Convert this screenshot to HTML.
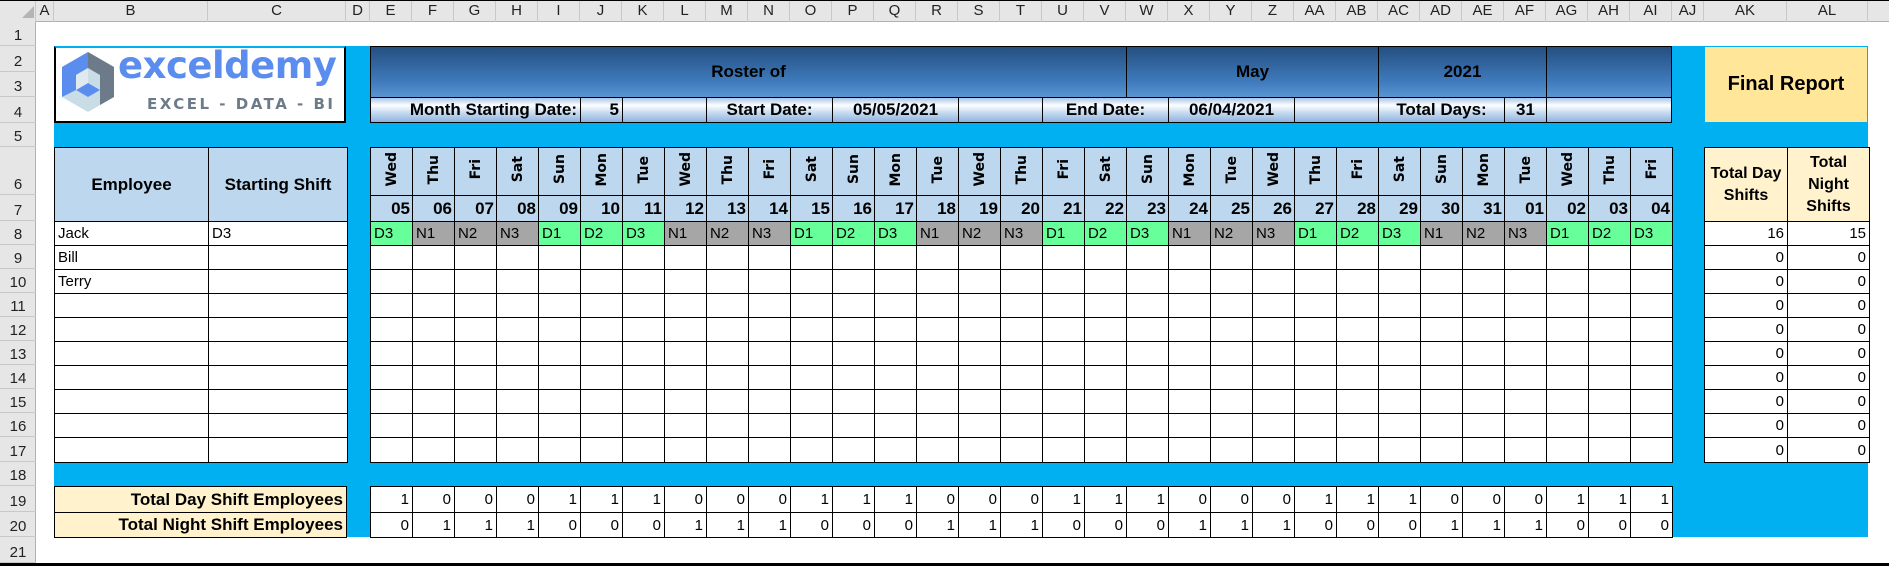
<!DOCTYPE html>
<html><head><meta charset="utf-8"><style>
*{margin:0;padding:0;box-sizing:border-box}
body{width:1889px;height:566px;overflow:hidden;background:#fff;position:relative;font-family:"Liberation Sans Narrow","Liberation Sans",sans-serif;font-size:15px;color:#000}
.a{position:absolute}
.ch{position:absolute;top:0;height:22px;line-height:22px;text-align:center;font-size:15px;color:#222;border-right:1px solid #c8c8c8}
.rh{position:absolute;left:0;width:36px;text-align:center;font-size:15px;color:#222;border-bottom:1px solid #c8c8c8;display:flex;align-items:flex-end;justify-content:center;padding-bottom:1px}
table{border-collapse:collapse;table-layout:fixed;position:absolute}
td{border:1px solid #000;padding:0 3px;overflow:hidden;white-space:nowrap;font-size:15px}
.dh td{background:#bdd7ee;text-align:center;vertical-align:middle;padding:0}
.v{writing-mode:vertical-rl;transform:rotate(180deg);font-family:"DejaVu Sans",sans-serif;font-weight:bold;font-size:14px;display:inline-block}
.num td{background:#bdd7ee;text-align:right;font-weight:bold;font-size:17px;padding-right:2px}
.d{background:#66ff99}.n{background:#a6a6a6}
.r td{text-align:right}
.hb{position:absolute;border:1px solid #000;font-weight:bold;font-size:17px;display:flex;align-items:center;justify-content:center}
.top{background:linear-gradient(#254f80,#3f7bbd 70%,#5a95d2)}
.mid{background:linear-gradient(#a8c6e8,#fdfeff 30%,#c9dcf1 60%,#8fb3de)}
</style></head><body>
<div class="a" style="left:0;top:0;width:1889px;height:22px;background:#e6e6e6;border-bottom:1px solid #b0b0b0"></div>
<div class="a" style="left:0;top:0;width:36px;height:22px;background:#e6e6e6;border-right:1px solid #c8c8c8"></div>
<div class="a" style="left:22px;top:6px;width:0;height:0;border-left:12px solid transparent;border-bottom:12px solid #b4b4b4"></div>
<div class="ch" style="left:36px;width:18px">A</div>
<div class="ch" style="left:54px;width:154px">B</div>
<div class="ch" style="left:208px;width:138px">C</div>
<div class="ch" style="left:346px;width:24px">D</div>
<div class="ch" style="left:370px;width:42px">E</div><div class="ch" style="left:412px;width:42px">F</div><div class="ch" style="left:454px;width:42px">G</div><div class="ch" style="left:496px;width:42px">H</div><div class="ch" style="left:538px;width:42px">I</div><div class="ch" style="left:580px;width:42px">J</div><div class="ch" style="left:622px;width:42px">K</div><div class="ch" style="left:664px;width:42px">L</div><div class="ch" style="left:706px;width:42px">M</div><div class="ch" style="left:748px;width:42px">N</div><div class="ch" style="left:790px;width:42px">O</div><div class="ch" style="left:832px;width:42px">P</div><div class="ch" style="left:874px;width:42px">Q</div><div class="ch" style="left:916px;width:42px">R</div><div class="ch" style="left:958px;width:42px">S</div><div class="ch" style="left:1000px;width:42px">T</div><div class="ch" style="left:1042px;width:42px">U</div><div class="ch" style="left:1084px;width:42px">V</div><div class="ch" style="left:1126px;width:42px">W</div><div class="ch" style="left:1168px;width:42px">X</div><div class="ch" style="left:1210px;width:42px">Y</div><div class="ch" style="left:1252px;width:42px">Z</div><div class="ch" style="left:1294px;width:42px">AA</div><div class="ch" style="left:1336px;width:42px">AB</div><div class="ch" style="left:1378px;width:42px">AC</div><div class="ch" style="left:1420px;width:42px">AD</div><div class="ch" style="left:1462px;width:42px">AE</div><div class="ch" style="left:1504px;width:42px">AF</div><div class="ch" style="left:1546px;width:42px">AG</div><div class="ch" style="left:1588px;width:42px">AH</div><div class="ch" style="left:1630px;width:42px">AI</div>
<div class="ch" style="left:1672px;width:32px">AJ</div>
<div class="ch" style="left:1704px;width:83px">AK</div>
<div class="ch" style="left:1787px;width:81px">AL</div>
<div class="a" style="left:0;top:22px;width:36px;height:544px;background:#e6e6e6;border-right:1px solid #b0b0b0"></div>
<div class="rh" style="top:22px;height:24px">1</div><div class="rh" style="top:46px;height:26px">2</div><div class="rh" style="top:72px;height:25px">3</div><div class="rh" style="top:97px;height:26px">4</div><div class="rh" style="top:123px;height:24px">5</div><div class="rh" style="top:147px;height:48px">6</div><div class="rh" style="top:195px;height:26px">7</div><div class="rh" style="top:221px;height:24px">8</div><div class="rh" style="top:245px;height:24px">9</div><div class="rh" style="top:269px;height:24px">10</div><div class="rh" style="top:293px;height:24px">11</div><div class="rh" style="top:317px;height:24px">12</div><div class="rh" style="top:341px;height:24px">13</div><div class="rh" style="top:365px;height:24px">14</div><div class="rh" style="top:389px;height:24px">15</div><div class="rh" style="top:413px;height:24px">16</div><div class="rh" style="top:437px;height:25px">17</div><div class="rh" style="top:462px;height:24px">18</div><div class="rh" style="top:486px;height:26px">19</div><div class="rh" style="top:512px;height:25px">20</div><div class="rh" style="top:537px;height:26px">21</div>
<div class="a" style="left:54px;top:46px;width:1814px;height:491px;background:#00b0f0"></div>
<div class="a" style="left:54px;top:46px;width:292px;height:77px;background:#fff;border:2px solid #000;border-top-color:#00b0f0"></div>
<svg class="a" style="left:60px;top:50px" width="56" height="68" viewBox="0 0 56 68">
<polygon points="28,2 54,17 54,47 28,62 2,47 2,17" fill="#c9dde6"/>
<polygon points="28,2 54,17 54,47 40,55 40,25 28,18" fill="#6c7a89"/>
<polygon points="2,17 28,2 28,18 16,25 16,40 2,47" fill="#5b8def"/>
<polygon points="16,40 28,33 40,40 28,47" fill="#5b8def"/>
<polygon points="16,25 28,18 28,33 16,40" fill="#dfe9ee"/>
</svg>
<div class="a" style="left:118px;top:44px;font-family:'DejaVu Sans',sans-serif;font-weight:bold;font-size:37px;color:#5b8def;letter-spacing:-0.5px">exceldemy</div>
<div class="a" style="left:147px;top:95px;font-family:'DejaVu Sans',sans-serif;font-size:15px;color:#6c7a89;letter-spacing:2.5px;font-weight:bold">EXCEL - DATA - BI</div>
<div class="hb top" style="left:370px;top:46px;width:757px;height:52px">Roster of</div>
<div class="hb top" style="left:1126px;top:46px;width:253px;height:52px">May</div>
<div class="hb top" style="left:1378px;top:46px;width:169px;height:52px">2021</div>
<div class="hb top" style="left:1546px;top:46px;width:126px;height:52px"></div>
<div class="hb mid" style="left:370px;top:97px;width:211px;height:26px;justify-content:flex-end;padding-right:3px">Month Starting Date:</div>
<div class="hb mid" style="left:580px;top:97px;width:43px;height:26px;justify-content:flex-end;padding-right:3px">5</div>
<div class="hb mid" style="left:622px;top:97px;width:85px;height:26px"></div>
<div class="hb mid" style="left:706px;top:97px;width:127px;height:26px">Start Date:</div>
<div class="hb mid" style="left:832px;top:97px;width:127px;height:26px">05/05/2021</div>
<div class="hb mid" style="left:958px;top:97px;width:85px;height:26px"></div>
<div class="hb mid" style="left:1042px;top:97px;width:127px;height:26px">End Date:</div>
<div class="hb mid" style="left:1168px;top:97px;width:127px;height:26px">06/04/2021</div>
<div class="hb mid" style="left:1294px;top:97px;width:85px;height:26px"></div>
<div class="hb mid" style="left:1378px;top:97px;width:127px;height:26px">Total Days:</div>
<div class="hb mid" style="left:1504px;top:97px;width:43px;height:26px">31</div>
<div class="hb mid" style="left:1546px;top:97px;width:126px;height:26px"></div>
<div class="hb" style="left:1704px;top:46px;width:164px;height:77px;background:#ffe699;border-color:#00b0f0;font-size:20px">Final Report</div>
<table style="left:54px;top:147px;width:293px">
<colgroup><col style="width:154px"><col style="width:139px"></colgroup>
<tr style="height:74px"><td style="background:#bdd7ee;text-align:center;font-weight:bold;font-size:17px">Employee</td><td style="background:#bdd7ee;text-align:center;font-weight:bold;font-size:17px">Starting Shift</td></tr>
<tr style="height:24px;background:#fff"><td>Jack</td><td>D3</td></tr>
<tr style="height:24px;background:#fff"><td>Bill</td><td></td></tr>
<tr style="height:24px;background:#fff"><td>Terry</td><td></td></tr>
<tr style="height:24px;background:#fff"><td></td><td></td></tr>
<tr style="height:24px;background:#fff"><td></td><td></td></tr>
<tr style="height:24px;background:#fff"><td></td><td></td></tr>
<tr style="height:24px;background:#fff"><td></td><td></td></tr>
<tr style="height:24px;background:#fff"><td></td><td></td></tr>
<tr style="height:24px;background:#fff"><td></td><td></td></tr>
<tr style="height:25px;background:#fff"><td></td><td></td></tr>
</table>
<table style="left:370px;top:147px;width:1303px;background:#fff">
<tr class="dh" style="height:48px"><td><span class="v">Wed</span></td><td><span class="v">Thu</span></td><td><span class="v">Fri</span></td><td><span class="v">Sat</span></td><td><span class="v">Sun</span></td><td><span class="v">Mon</span></td><td><span class="v">Tue</span></td><td><span class="v">Wed</span></td><td><span class="v">Thu</span></td><td><span class="v">Fri</span></td><td><span class="v">Sat</span></td><td><span class="v">Sun</span></td><td><span class="v">Mon</span></td><td><span class="v">Tue</span></td><td><span class="v">Wed</span></td><td><span class="v">Thu</span></td><td><span class="v">Fri</span></td><td><span class="v">Sat</span></td><td><span class="v">Sun</span></td><td><span class="v">Mon</span></td><td><span class="v">Tue</span></td><td><span class="v">Wed</span></td><td><span class="v">Thu</span></td><td><span class="v">Fri</span></td><td><span class="v">Sat</span></td><td><span class="v">Sun</span></td><td><span class="v">Mon</span></td><td><span class="v">Tue</span></td><td><span class="v">Wed</span></td><td><span class="v">Thu</span></td><td><span class="v">Fri</span></td></tr>
<tr class="num" style="height:26px"><td>05</td><td>06</td><td>07</td><td>08</td><td>09</td><td>10</td><td>11</td><td>12</td><td>13</td><td>14</td><td>15</td><td>16</td><td>17</td><td>18</td><td>19</td><td>20</td><td>21</td><td>22</td><td>23</td><td>24</td><td>25</td><td>26</td><td>27</td><td>28</td><td>29</td><td>30</td><td>31</td><td>01</td><td>02</td><td>03</td><td>04</td></tr>
<tr style="height:24px"><td class="d">D3</td><td class="n">N1</td><td class="n">N2</td><td class="n">N3</td><td class="d">D1</td><td class="d">D2</td><td class="d">D3</td><td class="n">N1</td><td class="n">N2</td><td class="n">N3</td><td class="d">D1</td><td class="d">D2</td><td class="d">D3</td><td class="n">N1</td><td class="n">N2</td><td class="n">N3</td><td class="d">D1</td><td class="d">D2</td><td class="d">D3</td><td class="n">N1</td><td class="n">N2</td><td class="n">N3</td><td class="d">D1</td><td class="d">D2</td><td class="d">D3</td><td class="n">N1</td><td class="n">N2</td><td class="n">N3</td><td class="d">D1</td><td class="d">D2</td><td class="d">D3</td></tr>
<tr style="height:24px"><td></td><td></td><td></td><td></td><td></td><td></td><td></td><td></td><td></td><td></td><td></td><td></td><td></td><td></td><td></td><td></td><td></td><td></td><td></td><td></td><td></td><td></td><td></td><td></td><td></td><td></td><td></td><td></td><td></td><td></td><td></td></tr>
<tr style="height:24px"><td></td><td></td><td></td><td></td><td></td><td></td><td></td><td></td><td></td><td></td><td></td><td></td><td></td><td></td><td></td><td></td><td></td><td></td><td></td><td></td><td></td><td></td><td></td><td></td><td></td><td></td><td></td><td></td><td></td><td></td><td></td></tr>
<tr style="height:24px"><td></td><td></td><td></td><td></td><td></td><td></td><td></td><td></td><td></td><td></td><td></td><td></td><td></td><td></td><td></td><td></td><td></td><td></td><td></td><td></td><td></td><td></td><td></td><td></td><td></td><td></td><td></td><td></td><td></td><td></td><td></td></tr>
<tr style="height:24px"><td></td><td></td><td></td><td></td><td></td><td></td><td></td><td></td><td></td><td></td><td></td><td></td><td></td><td></td><td></td><td></td><td></td><td></td><td></td><td></td><td></td><td></td><td></td><td></td><td></td><td></td><td></td><td></td><td></td><td></td><td></td></tr>
<tr style="height:24px"><td></td><td></td><td></td><td></td><td></td><td></td><td></td><td></td><td></td><td></td><td></td><td></td><td></td><td></td><td></td><td></td><td></td><td></td><td></td><td></td><td></td><td></td><td></td><td></td><td></td><td></td><td></td><td></td><td></td><td></td><td></td></tr>
<tr style="height:24px"><td></td><td></td><td></td><td></td><td></td><td></td><td></td><td></td><td></td><td></td><td></td><td></td><td></td><td></td><td></td><td></td><td></td><td></td><td></td><td></td><td></td><td></td><td></td><td></td><td></td><td></td><td></td><td></td><td></td><td></td><td></td></tr>
<tr style="height:24px"><td></td><td></td><td></td><td></td><td></td><td></td><td></td><td></td><td></td><td></td><td></td><td></td><td></td><td></td><td></td><td></td><td></td><td></td><td></td><td></td><td></td><td></td><td></td><td></td><td></td><td></td><td></td><td></td><td></td><td></td><td></td></tr>
<tr style="height:24px"><td></td><td></td><td></td><td></td><td></td><td></td><td></td><td></td><td></td><td></td><td></td><td></td><td></td><td></td><td></td><td></td><td></td><td></td><td></td><td></td><td></td><td></td><td></td><td></td><td></td><td></td><td></td><td></td><td></td><td></td><td></td></tr>
<tr style="height:25px"><td></td><td></td><td></td><td></td><td></td><td></td><td></td><td></td><td></td><td></td><td></td><td></td><td></td><td></td><td></td><td></td><td></td><td></td><td></td><td></td><td></td><td></td><td></td><td></td><td></td><td></td><td></td><td></td><td></td><td></td><td></td></tr>
</table>
<table class="r" style="left:1704px;top:147px;width:165px;background:#fff">
<colgroup><col style="width:83px"><col style="width:82px"></colgroup>
<tr style="height:74px"><td style="background:#fff2cc;text-align:center;font-weight:bold;white-space:normal;line-height:22px;font-size:16px">Total Day Shifts</td><td style="background:#fff2cc;text-align:center;font-weight:bold;white-space:normal;line-height:22px;font-size:16px">Total Night Shifts</td></tr>
<tr style="height:24px"><td>16</td><td>15</td></tr>
<tr style="height:24px"><td>0</td><td>0</td></tr>
<tr style="height:24px"><td>0</td><td>0</td></tr>
<tr style="height:24px"><td>0</td><td>0</td></tr>
<tr style="height:24px"><td>0</td><td>0</td></tr>
<tr style="height:24px"><td>0</td><td>0</td></tr>
<tr style="height:24px"><td>0</td><td>0</td></tr>
<tr style="height:24px"><td>0</td><td>0</td></tr>
<tr style="height:24px"><td>0</td><td>0</td></tr>
<tr style="height:25px"><td>0</td><td>0</td></tr>
</table>
<table style="left:54px;top:486px;width:293px">
<tr style="height:26px"><td style="background:#fff2cc;text-align:right;font-weight:bold;font-size:17px">Total Day Shift Employees</td></tr>
<tr style="height:25px"><td style="background:#fff2cc;text-align:right;font-weight:bold;font-size:17px">Total Night Shift Employees</td></tr>
</table>
<table class="r" style="left:370px;top:486px;width:1303px;background:#fff">
<tr style="height:26px"><td>1</td><td>0</td><td>0</td><td>0</td><td>1</td><td>1</td><td>1</td><td>0</td><td>0</td><td>0</td><td>1</td><td>1</td><td>1</td><td>0</td><td>0</td><td>0</td><td>1</td><td>1</td><td>1</td><td>0</td><td>0</td><td>0</td><td>1</td><td>1</td><td>1</td><td>0</td><td>0</td><td>0</td><td>1</td><td>1</td><td>1</td></tr>
<tr style="height:25px"><td>0</td><td>1</td><td>1</td><td>1</td><td>0</td><td>0</td><td>0</td><td>1</td><td>1</td><td>1</td><td>0</td><td>0</td><td>0</td><td>1</td><td>1</td><td>1</td><td>0</td><td>0</td><td>0</td><td>1</td><td>1</td><td>1</td><td>0</td><td>0</td><td>0</td><td>1</td><td>1</td><td>1</td><td>0</td><td>0</td><td>0</td></tr>
</table>
<div class="a" style="left:0;top:563px;width:1889px;height:3px;background:#000"></div>
<div class="a" style="left:0;top:0;width:1889px;height:1px;background:#000"></div>
</body></html>
